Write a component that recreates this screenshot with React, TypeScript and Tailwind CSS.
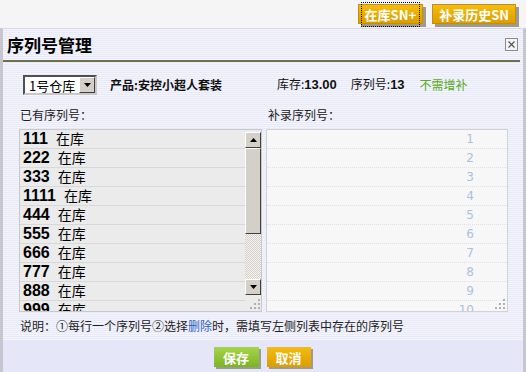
import React from 'react';

const ROWS = ['111', '222', '333', '1111', '444', '555', '666', '777', '888', '999'];

const stripes =
  'bg-[repeating-linear-gradient(to_bottom,#f4f4fc_0px,#f4f4fc_1px,#e9eaf7_1px,#e9eaf7_2px)]';

function Grip() {
  return (
    <svg width="10" height="10" viewBox="0 0 10 10" className="block">
      <rect x="8" y="0" width="2" height="2" fill="#b0b0b0" />
      <rect x="4" y="4" width="2" height="2" fill="#b0b0b0" />
      <rect x="8" y="4" width="2" height="2" fill="#b0b0b0" />
      <rect x="0" y="8" width="2" height="2" fill="#b0b0b0" />
      <rect x="4" y="8" width="2" height="2" fill="#b0b0b0" />
      <rect x="8" y="8" width="2" height="2" fill="#b0b0b0" />
    </svg>
  );
}

function ArrowBtn({ down }: { down?: boolean }) {
  return (
    <div className="h-[16px] w-[16px] bg-[#d4d0c8] border border-t-white border-l-white border-r-[#404040] border-b-[#404040] flex items-center justify-center">
      <svg width="7" height="4" viewBox="0 0 7 4">
        {down ? <polygon points="0,0 7,0 3.5,4" fill="#000" /> : <polygon points="0,4 7,4 3.5,0" fill="#000" />}
      </svg>
    </div>
  );
}

function TopBtn({ label, focus }: { label: string; focus?: boolean }) {
  return (
    <button className="h-[20px] px-[3px] bg-gradient-to-b from-[#f4bc10] to-[#dc9e00] border border-[#c89000] shadow-[3px_3px_0_#9a9a9a] text-white font-bold text-[13px] leading-none">
      <span className={focus ? 'px-[3px] py-[2px] outline outline-1 outline-dotted outline-black' : 'px-[3px]'}>
        {label}
      </span>
    </button>
  );
}

export default function App() {
  return (
    <div className="w-[526px] h-[372px] overflow-hidden bg-[#f5f5f5] flex flex-col font-['Noto_Sans_CJK_SC',sans-serif] text-[#111]">
      <div className="h-[30px] flex justify-end items-start gap-[9px] pt-[4px] pr-[10px]">
        <TopBtn label="在库SN+" focus />
        <TopBtn label="补录历史SN" />
      </div>

      <div className="flex-1 flex flex-col border-l-[3px] border-r-[3px] border-t border-l-[#c6c6ce] border-r-[#c6c6ce] border-t-[#d8d8e2]">
        <div className={`${stripes} flex-1 flex flex-col`}>
          <div className="h-[31px] flex items-center justify-between pl-[4px] pr-[5px]">
            <h1 className="text-[17px] font-bold leading-none text-black">序列号管理</h1>
            <div className="w-[13px] h-[13px] border border-[#8a8a8a] bg-[#f4f4f4] flex items-center justify-center">
              <svg width="7" height="7" viewBox="0 0 7 7">
                <path d="M0.5 0.5 L6.5 6.5 M6.5 0.5 L0.5 6.5" stroke="#555" strokeWidth="1.2" />
              </svg>
            </div>
          </div>
          <div className="h-[2px] bg-[#6f6f52] mr-[3px]" />

          <div className="flex items-center mt-[13px] pl-[20px] text-[12px]">
            <div className="w-[74px] h-[20px] border-2 border-t-[#505050] border-l-[#505050] border-b-[#c8c8c8] border-r-[#c8c8c8] bg-white flex items-center">
              <span className="flex-1 pl-[4px] text-[13px] leading-none text-black">1号仓库</span>
              <div className="w-[16px] h-[16px] bg-[#d4d0c8] border border-t-white border-l-white border-r-[#404040] border-b-[#404040] flex items-center justify-center">
                <svg width="7" height="4" viewBox="0 0 7 4">
                  <polygon points="0,0 7,0 3.5,4" fill="#000" />
                </svg>
              </div>
            </div>
            <span className="ml-[13px] font-bold">产品:安控小超人套装</span>
            <span className="ml-[55px]">
              库存:<b className="font-['Liberation_Sans',sans-serif] text-[13px]">13.00</b>
            </span>
            <span className="ml-[14px]">
              序列号:<b className="font-['Liberation_Sans',sans-serif] text-[13px]">13</b>
            </span>
            <span className="ml-[15px] text-[#5aab1e]">不需增补</span>
          </div>

          <div className="flex mt-[11px] pl-[16px] text-[12px] text-[#222]">
            <div className="w-[249px] pl-[1px]">已有序列号：</div>
            <div>补录序列号：</div>
          </div>

          <div className="flex mt-[5px] pl-[16px]">
            <div className="w-[243px] h-[183px] border border-[#c8c8c8] bg-[#ebebeb] flex overflow-hidden">
              <div className="flex-1 overflow-hidden">
                {ROWS.map((n) => (
                  <div key={n} className="h-[19px] border-b border-[#d8d8d8] flex items-center pl-[3px]">
                    <span className="font-['Liberation_Sans',sans-serif] font-bold text-[16px] leading-none text-black">{n}</span>
                    <span className="ml-[8px] mb-[3px] text-[14px] leading-none text-black">在库</span>
                  </div>
                ))}
              </div>
              <div className="w-[16px] flex flex-col pt-[2px]">
                <ArrowBtn />
                <div className="h-[86px] bg-[#d4d0c8] border border-t-white border-l-white border-r-[#404040] border-b-[#404040]" />
                <div className="flex-1 bg-[repeating-conic-gradient(#d4d0c8_0_25%,#f4f4f4_0_50%)] [background-size:2px_2px]" />
                <ArrowBtn down />
                <div className="h-[16px] flex items-end justify-end pb-[2px] pr-[1px]">
                  <Grip />
                </div>
              </div>
            </div>

            <div className="ml-[4px] w-[242px] h-[183px] border border-[#d2d2d2] bg-[#f7f7f7] relative overflow-hidden">
              {Array.from({ length: 10 }, (_, i) => (
                <div
                  key={i}
                  className="h-[19px] border-b border-dotted border-[#e2e2e2] flex items-center justify-end pr-[33px] text-[12px] text-[#a9c2de] font-['DejaVu_Sans',sans-serif] leading-none"
                >
                  {i + 1}
                </div>
              ))}
              <div className="absolute right-[2px] bottom-[2px]">
                <Grip />
              </div>
            </div>
          </div>

          <div className="mt-[6px] pl-[17px] text-[12px] text-[#222] leading-[16px]">
            说明：①每行一个序列号②选择<span className="text-[#2f5fc0]">删除</span>时，需填写左侧列表中存在的序列号
          </div>
          <div className="h-[6px]" />
        </div>

        <div className="h-[32px] bg-[#e5e6f8] flex justify-center items-start pt-[7px] gap-[8px] pr-[2px]">
          <button className="w-[45px] h-[20px] bg-gradient-to-b from-[#a6d448] to-[#7db422] shadow-[2px_2px_0_#9a9a9a] text-white font-bold text-[13px] leading-none">
            保存
          </button>
          <button className="w-[44px] h-[20px] bg-gradient-to-b from-[#f4bc10] to-[#dc9e00] shadow-[2px_2px_0_#9a9a9a] text-white font-bold text-[13px] leading-none">
            取消
          </button>
        </div>
      </div>
    </div>
  );
}
